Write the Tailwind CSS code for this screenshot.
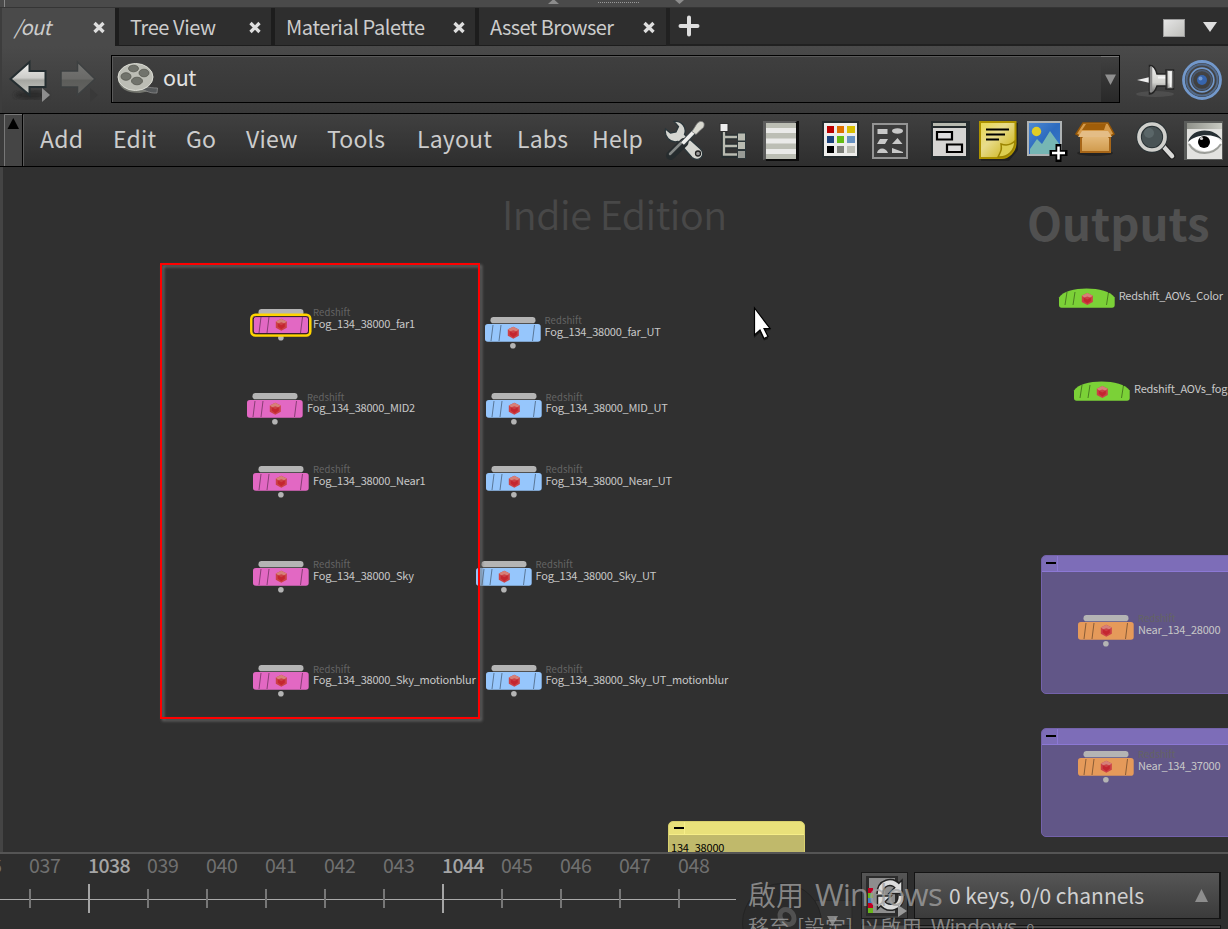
<!DOCTYPE html>
<html lang="en">
<head>
<meta charset="utf-8">
<title>/out</title>
<script src="https://cdn.jsdelivr.net/npm/@tailwindcss/browser@4"></script>
</head>
<body class="w-[1228px] h-[929px] overflow-hidden bg-[#2e2e2e] font-['Noto_Sans_CJK_SC',sans-serif] text-[#cccccc] whitespace-nowrap">
<div class="flex flex-col w-[1228px] h-[929px] overflow-hidden">

  <!-- splitter strip -->
  <div class="h-[8px] shrink-0 bg-[#4a4a4a] border-b border-[#353535]">
    <svg class="block" width="1228" height="7"><path d="M4.500 0V7" stroke="#888"/><path d="M548 4L553.500 -1L559 4Z M675 0H684L679.500 4Z" fill="#8c8c8c"/><path d="M598 2.500H639" stroke="#999" stroke-dasharray="1 1"/></svg>
  </div>

  <!-- pane tabs -->
  <div class="flex h-[38px] shrink-0 bg-[#2e2e2e] text-[20px] leading-[38px] tracking-[-0.4px]">
    <div class="flex w-[115px] shrink-0 bg-[#4a4a4a] border-l-2 border-[#3d3d3d] pl-[12px]"><span class="w-[78px] italic tracking-[-0.6px]">/out</span><svg class="mt-[12px]" width="14" height="14" viewBox="0 0 14 14"><path d="M2.500 3L11.500 12M11.500 3L2.500 12" stroke="#dedede" stroke-width="3.300"/></svg></div>
    <div class="flex w-[156px] shrink-0 border-l-4 border-b border-[#1d1d1d] pl-[11px]"><span class="w-[118px]">Tree View</span><svg class="mt-[12px]" width="14" height="14" viewBox="0 0 14 14"><path d="M2.500 3L11.500 12M11.500 3L2.500 12" stroke="#dedede" stroke-width="3.300"/></svg></div>
    <div class="flex w-[204px] shrink-0 border-l-4 border-b border-[#1d1d1d] pl-[11px]"><span class="w-[166px]">Material Palette</span><svg class="mt-[12px]" width="14" height="14" viewBox="0 0 14 14"><path d="M2.500 3L11.500 12M11.500 3L2.500 12" stroke="#dedede" stroke-width="3.300"/></svg></div>
    <div class="flex w-[191px] shrink-0 border-l-4 border-b border-[#1d1d1d] pl-[11px]"><span class="w-[152px] tracking-[-0.6px]">Asset Browser</span><svg class="mt-[12px]" width="14" height="14" viewBox="0 0 14 14"><path d="M2.500 3L11.500 12M11.500 3L2.500 12" stroke="#dedede" stroke-width="3.300"/></svg></div>
    <div class="flex grow border-l-4 border-b-2 border-[#212121]">
      <svg width="558" height="36" viewBox="670 8 558 36"><path d="M689 17.500V34.500M680.500 26H697.500" stroke="#dedede" stroke-width="4" stroke-linecap="round"/><defs><linearGradient id="sq" x2="1" y2="1"><stop stop-color="#e6e6e6"/><stop offset="1" stop-color="#bebeba"/></linearGradient></defs><rect x="1163.500" y="19.500" width="21" height="17" fill="url(#sq)" stroke="#9b9b9b"/><path d="M1203 22H1217L1210 32Z" fill="#dedede"/></svg>
    </div>
  </div>

  <!-- path bar -->
  <div class="flex h-[67px] shrink-0 bg-linear-to-b from-[#4a4a4a] to-[#393939] border-l-2 border-[#3d3d3d]">
    <svg class="shrink-0" width="109" height="67" viewBox="2 46 109 67">
      <defs><linearGradient id="ar" x2="0" y2="1"><stop stop-color="#f0f0ee"/><stop offset=".48" stop-color="#cdcdca"/><stop offset=".55" stop-color="#a5a6a1"/><stop offset="1" stop-color="#c9cac5"/></linearGradient><linearGradient id="ar2" x2="0" y2="1"><stop stop-color="#767674"/><stop offset=".5" stop-color="#6a6a68"/><stop offset=".56" stop-color="#5c5d5a"/><stop offset="1" stop-color="#646462"/></linearGradient><filter id="bl"><feGaussianBlur stdDeviation="2"/></filter></defs>
      <ellipse cx="31" cy="95" rx="17" ry="4" fill="#222" opacity=".7" filter="url(#bl)"/>
      <path d="M10.500 79L29.500 62V71H45.500V87H29.500V95Z" fill="url(#ar)" stroke="#252e31" stroke-width="2"/>
      <path d="M42 88L50 95L42 102Z" fill="#8d8d8d"/>
      <path d="M95 79L77.500 62V71H61V87H77.500V95Z" fill="url(#ar2)" stroke="#3d4041" stroke-width="1.500"/><path d="M90 88L98 95L90 102Z" fill="#393939"/>
    </svg>
    <div class="flex mt-[9px] h-[48px] w-[1009px] shrink-0 border border-black bg-linear-to-b from-[#3f3f3f] to-[#373737]">
      <div class="flex grow border-t border-l border-[#595959]">
        <svg class="shrink-0" width="50" height="45" viewBox="113 57 50 45">
          <path d="M118 79C119 89 127 93 140 93L150 91L145 84L153 80" fill="#74766f"/><path d="M138 89C146 85 148 88 157.500 88L157 93C148 94 144 88 138 90Z" fill="#55585a" stroke="#929292" stroke-width=".7"/>
          <ellipse cx="135.500" cy="77" rx="17.500" ry="13.500" fill="#bcbdb5" stroke="#dcddd5"/>
          <g fill="#71736c" stroke="#55574f" stroke-width=".8"><ellipse cx="133.500" cy="68.500" rx="5" ry="3.300"/><ellipse cx="126" cy="76.500" rx="5" ry="3.800"/><ellipse cx="144" cy="73" rx="5" ry="3.800"/><ellipse cx="137" cy="81" rx="5.500" ry="3.800"/></g>
        </svg>
        <span class="text-[21.500px] leading-[39px] tracking-[-0.4px] text-[#e2e2e2]">out</span>
      </div>
      <div class="w-[18px] border-t border-[#777] bg-linear-to-b from-[#404040] to-[#292929]"><svg class="block" width="18" height="44"><path d="M4 17.500H15L9.500 28Z" fill="#909090"/></svg></div>
    </div>
    <svg class="shrink-0" width="108" height="67" viewBox="1120 46 108 67">
      <defs><linearGradient id="pin" x2="0" y2="1"><stop stop-color="#eee"/><stop offset=".6" stop-color="#d2d2ce"/><stop offset="1" stop-color="#666"/></linearGradient></defs>
      <ellipse cx="1155" cy="94" rx="19" ry="3" fill="#666" opacity=".4"/>
      <path d="M1137 80L1150 77V83Z" fill="#eee"/><path d="M1149.500 65.500C1154 65 1156 70 1157 74H1166V70H1173.500V89H1166V86H1157C1155 92 1153 94 1149.500 94Z" fill="url(#pin)" stroke="#242424" stroke-width="1.500"/><path d="M1151 67V92" stroke="#8a8a8a" stroke-width="2.500"/><path d="M1158 77.500H1166M1170.500 72V87" stroke="#f5f5f5" stroke-width="1.800"/><path d="M1166.500 71V88" stroke="#333" stroke-width="2"/><path d="M1172.800 71V88" stroke="#666" stroke-width="1.500"/>
      <g fill="none" stroke="#7298cb"><circle cx="1202" cy="80" r="18.500" stroke-width="2.800"/><circle cx="1202" cy="80" r="15.500" stroke="#526a8b" stroke-width="2"/><circle cx="1202" cy="80" r="11.800" stroke-width="1.700"/><circle cx="1202" cy="80" r="9.500" stroke="#495a73" stroke-width="1.500"/></g><circle cx="1202" cy="80" r="5" fill="#3765ad"/><circle cx="1200.500" cy="78.500" r="2" fill="#7299d1"/>
    </svg>
  </div>

  <!-- menu bar -->
  <div class="flex h-[54px] shrink-0 border-y border-black bg-linear-to-b from-[#404040] to-[#2e2e2e]">
    <svg class="shrink-0" width="40" height="52" viewBox="0 114 40 52"><rect y="114" width="4" height="52" fill="#3b3b3b"/><rect x="4" y="114" width="18" height="52" fill="#454545"/><path d="M4.500 166V114.500H22" stroke="#777" fill="none"/><path d="M22.500 114V166" stroke="#000"/><path d="M23.500 166V115" fill="none" stroke="#5a5a5a"/><path d="M7.500 129L13.300 118L19 129Z" fill="#000"/></svg>
    <div class="flex w-[624px] shrink-0 text-[23px] leading-[49px] tracking-[0.2px]">
      <span class="w-[73px]">Add</span><span class="w-[73px]">Edit</span><span class="w-[60px]">Go</span><span class="w-[81px]">View</span><span class="w-[90px]">Tools</span><span class="w-[100px]">Layout</span><span class="w-[75px]">Labs</span><span>Help</span>
    </div>
    <svg class="shrink-0" width="564" height="52" viewBox="664 114 564 52">
      <defs>
        <linearGradient id="nt" x2="1" y2="1"><stop stop-color="#e9d84d"/><stop offset=".4" stop-color="#e8dc8c"/><stop offset="1" stop-color="#c7ac00"/></linearGradient>
        <linearGradient id="sky" x2="1" y2="1"><stop stop-color="#4f8ad2"/><stop offset=".5" stop-color="#2d6bbf"/><stop offset="1" stop-color="#3a7cc8"/></linearGradient>
        <linearGradient id="bx" x2="0" y2="1"><stop stop-color="#e6bc7e"/><stop offset="1" stop-color="#d09a4c"/></linearGradient>
        <linearGradient id="bar" x2="1"><stop stop-color="#8f918a"/><stop offset="1" stop-color="#c9cbc3"/></linearGradient>
      </defs>
      <!-- tools -->
      <g transform="translate(-1 .5)">
      <path d="M675 121C683 120 688 127 685.500 134L701 148C708 154 700 163 693 157L679 141C671 143 665 136 666.500 128.500L671.500 132.500L677 131.500L679.500 126Z" fill="#d5d6d1" stroke="#2b363a" stroke-width="1.300"/>
      <path d="M671.500 155L685 142" stroke="#262c2e" stroke-width="9" stroke-linecap="round"/><path d="M671 153.500L684 140.500" stroke="#858987" stroke-width="2.500" stroke-linecap="round"/>
      <path d="M684 143L697 129" stroke="#343d40" stroke-width="6"/><path d="M683.500 143L697 129" stroke="#eeeeec" stroke-width="3.800"/><path d="M693 131L698 123Q702 119 705 122.500Q706 127 702 129L697 134Z" fill="#d9d9d0" stroke="#777" stroke-width=".8"/><circle cx="699" cy="153" r="2.500" fill="#999" stroke="#222" stroke-width="1.300"/>
      </g>
      <!-- tree -->
      <path d="M724 132V155.500H739M724 137H739M724 146H739" fill="none" stroke="#252d2f" stroke-width="5"/><path d="M724 132V154.500H738M724 137H738M724 146H738" fill="none" stroke="#b9bbb1" stroke-width="2.300"/><rect x="720" y="123.500" width="8" height="8" fill="#eee" stroke="#333"/><g fill="#b9bbb1" stroke="#2d3639"><rect x="737.500" y="133" width="8" height="8"/><rect x="737.500" y="141.500" width="8" height="8"/><rect x="737.500" y="150.500" width="8" height="8" fill="#989b96"/></g>
      <!-- list -->
      <path d="M763 121H799V161H766Z" fill="#0c0c0c"/><path d="M763 160V121H797L795 123H766V159Z" fill="#5c5c5c"/><rect x="766" y="123" width="30" height="36" fill="#bcbeb4"/><path d="M766 130.500H796M766 141H796M766 151.500H796" stroke="#eaeae8" stroke-width="5"/>
      <!-- palette -->
      <rect x="822" y="121" width="37" height="37" fill="#252c2e"/><rect x="824" y="123" width="33" height="33" fill="#eeeeec"/>
      <g><path d="M827 126h7v7h-7z" fill="#b00"/><path d="M837 126h7v7h-7z" fill="#de7100"/><path d="M847 126h8v7h-8z" fill="#d7bf00"/><path d="M827 136h7v7h-7z" fill="#1c437c"/><path d="M837 136h7v7h-7z" fill="#65bd14"/><path d="M847 136h8v7h-8z" fill="#6692c2"/><path d="M827 146h7v7h-7z"/><path d="M837 146h7v7h-7z" fill="#7d7f79"/><path d="M847 146h8v7h-8z" fill="#bcbeb5"/></g>
      <!-- shapes -->
      <rect x="873" y="124" width="34" height="34" fill="#3c3c3c" stroke="#949494" stroke-width="2"/><g fill="#c8c8c8"><path d="M877.500 129h10v5h-10zM880 139h8l-3 5h-8zM892 144l5.500-6 5 6zM877 153c1-6 9-6 11 0zM892 148l11 4v1h-11z"/><ellipse cx="897.500" cy="131" rx="5.500" ry="2.700"/></g>
      <!-- layout windows -->
      <rect x="931" y="121" width="39" height="39" fill="#242b2d"/><path d="M933 123H966V126H933Z" fill="#b7bab0"/><path d="M933 128H966V156H933Z" fill="#d5d5d3"/><path d="M937 132h15v7.500h-15zM947 144.500h15v7.500h-15z" fill="#ddd" stroke="#000" stroke-width="2.200"/>
      <!-- sticky note -->
      <path d="M981 123H1018V150L1009 161H981Z" fill="#222"/><path d="M980 122H1015.500V144C1015 152 1008 158 1002 158H980Z" fill="url(#nt)" stroke="#ae9300" stroke-width="2"/><path d="M998 157C1001 151 1002 150 1001 144C1007 146 1012 144 1015 141C1015 150 1008 158 998 157Z" fill="#ddcf50" stroke="#9c8400" stroke-width="1.500"/><path d="M986 129.500H1009M986 134.500H1005M986 139.500H999" stroke="#000" stroke-width="2.200"/>
      <!-- image -->
      <rect x="1028" y="122" width="33" height="33" fill="url(#sky)" stroke="#afb3b4" stroke-width="2"/><circle cx="1036.500" cy="131.500" r="4.700" fill="#e1cd26"/><path d="M1030 154V149L1037 139L1042 144L1050 131L1060 145V154Z" fill="#76b6b4"/><path d="M1055.500 144h6v6h6v6h-6v6h-6v-6h-6v-6h6z" fill="#000"/><path d="M1058.500 146.500V159.500M1052 153H1065" stroke="#fff" stroke-width="2.500"/>
      <!-- box -->
      <ellipse cx="1095" cy="153" rx="18" ry="3" fill="#191919" opacity=".6"/><path d="M1081 135H1110V152H1081Z" fill="url(#bx)" stroke="#a76618" stroke-width="2"/><path d="M1083 123H1108L1114 134L1109 137L1106 132H1085L1082 137L1076 134Z" fill="#d69b4b" stroke="#965707" stroke-width="1.500"/><path d="M1086 124H1106L1104 130H1082Z" fill="#9f5d09"/><path d="M1082 131H1108L1112 137H1078Z" fill="#e4bd86"/>
      <!-- magnifier -->
      <path d="M1163 146L1172 156" stroke="#222" stroke-width="7" stroke-linecap="round"/><path d="M1163 146L1172 156" stroke="#d9d9d7" stroke-width="4.500" stroke-linecap="round"/><circle cx="1152" cy="137" r="13" fill="#495355" stroke="#293235" stroke-width="5.500"/><circle cx="1152" cy="137" r="13" fill="none" stroke="#d0d0cc" stroke-width="3.700"/><circle cx="1149" cy="133" r="5" fill="#6c797c" opacity=".5"/>
      <!-- eye -->
      <rect x="1184" y="121" width="39" height="39" fill="#5a5c5a"/><rect x="1187" y="123" width="35" height="36" fill="#e2e2df"/><rect x="1187" y="123" width="35" height="6" fill="url(#bar)"/><path d="M1188 142C1195 130 1213 130 1222 143C1213 154 1197 154 1188 142Z" fill="#fff"/><path d="M1189 144C1196 156 1213 156 1221 144" fill="none" stroke="#9c9e99" stroke-width="2"/><path d="M1188 142C1192 127 1215 127 1222 140C1213 133 1196 134 1188 142Z" fill="#273034"/><circle cx="1204" cy="142" r="6" fill="#000"/><circle cx="1201.500" cy="138.500" r="1.600" fill="#ccc"/>
    </svg>
  </div>

  <!-- network canvas -->
  <div class="relative h-[685px] shrink-0 overflow-hidden bg-[#303030] border-l-[3px] border-[#444]">
    <div id="canvas" class="absolute -top-[167px] -left-[3px] w-[1228px] h-[929px]">
      <div class="absolute left-[502px] top-[183px] text-[39.500px] leading-[60px] tracking-[-0.5px] font-[350] text-[#484848]">Indie Edition</div>
      <div class="absolute left-[1027px] top-[188px] text-[45.500px] leading-[66px] font-bold text-[#505050]">Outputs</div>
      <div class="absolute left-[1041px] top-[555px] w-[220px] h-[139px] rounded-[5px] border border-[#7462ab] bg-[#615687] overflow-hidden"><div class="flex h-[16px] bg-[#7d6db8] border-b border-[#8c78d5]"><div class="w-[16px] border-r border-[#8c78d5] pt-[6px] pl-[4px]"><div class="w-[10px] h-[2px] bg-black"></div></div></div></div>
      <div class="absolute left-[1041px] top-[728px] w-[220px] h-[109px] rounded-[5px] border border-[#7462ab] bg-[#615687] overflow-hidden"><div class="flex h-[16px] bg-[#7d6db8] border-b border-[#8c78d5]"><div class="w-[16px] border-r border-[#8c78d5] pt-[6px] pl-[4px]"><div class="w-[10px] h-[2px] bg-black"></div></div></div></div>
      <div class="absolute left-[668px] top-[821px] w-[137px] h-[60px] rounded-[5px] border border-[#d8d06e] bg-[#c0b96b] overflow-hidden"><div class="flex h-[13px] bg-[#e9e17a] border-b border-[#f6ee88]"><div class="w-[16px] border-r border-[#f6ee88] pt-[5px] pl-[5px]"><div class="w-[10px] h-[2px] bg-black"></div></div></div><div class="pl-[2px] text-[11px] tracking-[-0.2px] leading-[25px] text-black">134_38000</div></div>
    </div>
    <!-- highlighted region -->
    <div class="absolute left-[157px] top-[96px] w-[320px] h-[456px] border-2 border-[#ff0000] drop-shadow-[2.500px_2.500px_1.500px_#707070]"></div>
    <svg class="absolute left-[748px] top-[139px]" width="24" height="36"><path d="M3 6V32L9 26.500L13 34.500L17 33L13.500 25L20 24Z" fill="#000" opacity=".5"/><path d="M4.500 2V29L10 24L14 32.500L18 30.500L14 22.500H20Z" transform="translate(-1 0)" fill="#fff" stroke="#000" stroke-width="1.200"/></svg>
  </div>

  <!-- playbar -->
  <div class="relative flex h-[77px] shrink-0 bg-[#2e2e2e] border-t-2 border-[#555555] overflow-hidden">
    <div id="ruler" class="relative w-[740px] h-[75px] shrink-0 overflow-hidden text-[19.500px] tracking-[-0.3px] leading-[22px]">
      <div class="absolute left-0 top-[45px] w-[736px] h-px bg-[#aaa]"></div>
    </div>
    <svg class="shrink-0" width="174" height="75" viewBox="740 854 174 75">
      <defs><linearGradient id="bt" x2="0" y2="1"><stop stop-color="#565656"/><stop offset="1" stop-color="#3a3a3a"/></linearGradient></defs>
      <rect x="815" y="900.500" width="37" height="25" fill="#363636" stroke="#292929"/>
      <circle cx="782" cy="923" r="39.500" fill="#2b2b2b" stroke="#242424"/><ellipse cx="787" cy="917" rx="6.500" ry="8" transform="rotate(-35 787 917)" fill="none" stroke="#515151" stroke-width="5"/>
      <path d="M827 916H838L832.500 926Z" fill="#858585"/>
      <rect x="861.500" y="872.500" width="46" height="46" fill="url(#bt)" stroke="#1b1b1b"/><rect x="861.500" y="925" width="46" height="8" fill="#484848" stroke="#222"/>
      <rect x="866" y="876" width="32" height="40" fill="#2c2c2c"/><rect x="869" y="878" width="26" height="35" fill="#8e8e8e"/>
      <path d="M868 888h5v5h-5z" fill="#c00020"/><path d="M868 893h5v5h-5z" fill="#69b51c"/><path d="M868 898h5v5h-5z" fill="#437ec9"/><path d="M868 903h5v5h-5z" fill="#c00020"/><path d="M868 908h5v5h-5z" fill="#69b51c"/>
      <g fill="none" stroke="#222" stroke-width="7.500"><path d="M880 894C880 882 892 879 899 887M901 896C901 908 888 911 881 902"/></g><path d="M902 880V893.500H889ZM877.500 909V896H891Z" fill="#ddd" stroke="#222" stroke-width="1.500"/><g fill="none" stroke="#ddd" stroke-width="4.500"><path d="M880 894C880 882 892 879 898.500 887.500M901 896C901 908 888 911 881.500 902"/></g><path d="M898 905L907 911L898 917Z" fill="#999"/>
    </svg>
    <div class="relative flex flex-col w-[307px] shrink-0">
      <div class="mt-[18px] flex h-[47px] shrink-0 justify-between border border-[#141414] border-r-2 bg-linear-to-b from-[#565656] to-[#3b3b3b] pl-[34px] pr-[11px] text-[21px] leading-[44px] text-[#d0d0d0]"><span>0 keys, 0/0 channels</span><svg class="mt-[16px]" width="13" height="14"><path d="M0 13L6.500 0L13 13Z" fill="#8d8d8d"/></svg></div>
      <div class="mt-[6px] h-[6px] border border-[#141414] bg-[#494949]"></div>
    </div>
    <!-- activation notice -->
    <div class="absolute left-[748px] top-[20px] flex items-baseline text-[28px] leading-[40px] font-normal text-[#a0a0a0]/80 font-['Noto_Sans_CJK_TC',sans-serif]"><span class="font-[350]">啟用</span><span class="ml-[11px] text-[31px] tracking-[-0.7px] font-['Open_Sans',sans-serif]">Windows</span></div>
    <div class="absolute left-[748px] top-[57px] flex items-baseline text-[21px] leading-[30px] font-[350] text-[#a0a0a0]/80 font-['Noto_Sans_CJK_TC',sans-serif]"><span>移至</span><span class="ml-[7px]">[設定]</span><span class="ml-[6px]">以啟用</span><span class="ml-[9px] text-[21px] tracking-[-0.5px] font-normal font-['Open_Sans',sans-serif]">Windows</span><span class="ml-[3px]">。</span></div>
  </div>
</div>

<script>
const PINK = '#e268c3', BLUE = '#96c6fc', ORANGE = '#e59a5a', GREEN = '#7bd137';
const nodes = [
  [253, 315.5, PINK, 'Fog_134_38000_far1', 'selected'],
  [247, 400.3, PINK, 'Fog_134_38000_MID2'],
  [253, 472.500, PINK, 'Fog_134_38000_Near1'],
  [253, 567.8, PINK, 'Fog_134_38000_Sky'],
  [253, 672.4, PINK, 'Fog_134_38000_Sky_motionblur'],
  [484.5, 323.8, BLUE, 'Fog_134_38000_far_UT'],
  [485.5, 400.3, BLUE, 'Fog_134_38000_MID_UT'],
  [485.5, 472.500, BLUE, 'Fog_134_38000_Near_UT'],
  [475.5, 567.8, BLUE, 'Fog_134_38000_Sky_UT'],
  [485.5, 672.4, BLUE, 'Fog_134_38000_Sky_UT_motionblur'],
  [1078, 621.8, ORANGE, 'Near_134_28000'],
  [1078, 757.8, ORANGE, 'Near_134_37000'],
  [1058.7, 288, GREEN, 'Redshift_AOVs_Color', 'dome'],
  [1074, 381, GREEN, 'Redshift_AOVs_fog', 'dome'],
];
const canvas = document.getElementById('canvas');
nodes.forEach(([x, y, color, name, kind]) => {
  const dome = kind === 'dome';
  const cy = dome ? 11 : 8.7;
  const body = dome
    ? `<path d="M0 17V9.500C7 -2.500 48 -2.500 55.700 9.500V17Q55.700 19.800 53 19.800H2.500Q0 19.800 0 17Z" fill="${color}"/>`
    : `<rect width="55.700" height="17.800" rx="2.800" fill="${color}"/>`;
  const ports = dome ? '' : `<rect x="5.500" y="-7" width="45" height="6.300" rx="3.150" fill="#b4b4b4"/><circle cx="27.900" cy="21.800" r="2.800" fill="#b4b4b4"/>`;
  const ring = kind === 'selected' ? `<rect x="-1.700" y="-1.200" width="59" height="20.800" rx="4" fill="none" stroke="#ffd400" stroke-width="2.500"/><rect x=".3" y=".6" width="55.200" height="17" rx="2.500" fill="none" stroke="#2b1c20"/>` : '';
  const t = dome ? 4 : 1;
  const el = document.createElement('div');
  el.className = 'absolute';
  el.style.left = x + 'px';
  el.style.top = y + 'px';
  el.innerHTML = `<svg class="block overflow-visible" width="56" height="20">${ports}${body}
    <path d="M8 ${t}L6 17M16 ${t}L14 17M49.500 ${t}L47.500 17" stroke="#000" stroke-opacity=".45" stroke-width=".9"/>${ring}
    <g transform="translate(28.300 ${cy})"><path d="M0 -6L5.500 -3.300V3L0 6L-5.500 3V-3.300Z" fill="#cb4146"/><path d="M0 -6L5.500 -3.300L3 -1.500L0 -2.500L-3 -1.500L-5.500 -3.300Z" fill="#d68078"/><path d="M-3.500 -1.500L0 .5L3.500 -1.500V2L0 4.500L-3.500 2Z" fill="#c42630"/></g></svg>
    ${dome ? '' : '<div class="absolute left-[60px] -top-[8.5px] text-[9.500px] leading-[10px] text-[#646464] tracking-[0.1px]">Redshift</div>'}
    <div class="absolute left-[60px] top-[1.100px] text-[11px] leading-[12px] tracking-[-0.22px] text-[#c8c8c8]">${name}</div>`;
  canvas.append(el);
});

const ruler = document.getElementById('ruler');
for (let f = 1036; f <= 1048; f++) {
  const major = f === 1038 || f === 1044;
  const tick = document.createElement('div');
  tick.className = major ? 'absolute top-0 h-[75px] text-[#a5a5a5]' : 'absolute top-0 h-[75px] text-[#707070]';
  tick.style.left = (f - 1037) * 59 + 29 + 'px';
  tick.innerHTML = (major ? '<div class="absolute left-0 top-[30px] w-[2px] h-[29px] bg-[#a5a5a5]"></div>' : '<div class="absolute left-0 top-[35px] w-[2px] h-[19px] bg-[#777]"></div>')
    + (major ? `<span class="font-medium tracking-[-0.6px]">${f}</span>` : `<span>${String(f).slice(1)}</span>`);
  ruler.append(tick);
}
</script>
</body>
</html>
